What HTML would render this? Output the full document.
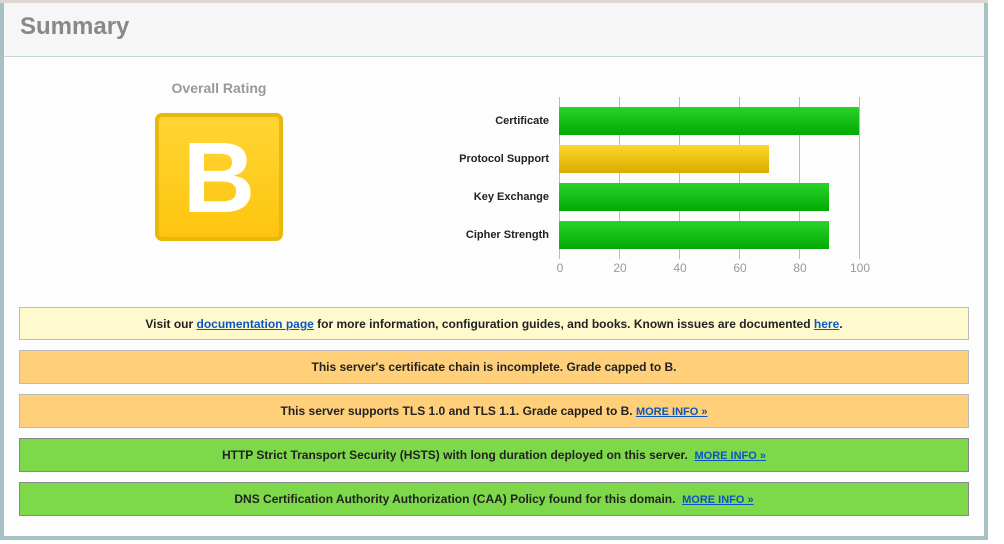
<!DOCTYPE html>
<html><head><meta charset="utf-8"><style>
*{margin:0;padding:0;box-sizing:border-box}
body{width:1004px;height:544px;background:#fff;position:relative;font-family:"Liberation Sans",Arial,sans-serif;overflow:hidden}
.frame{position:absolute;left:0;top:2px;width:988px;height:538px;background:#a6c0c4}
.top{position:absolute;left:0;top:0;width:988px;height:3px;background:#ddd6d2}
.panel{position:absolute;left:4px;top:3px;width:980px;height:533px;background:#fdfdfd}
.hdr{position:absolute;left:0;top:0;width:980px;height:54px;background:#f6f6f6;border-bottom:1px solid #c5d6d6}
.hdr h1{position:absolute;left:16px;top:10px;font-size:24px;font-weight:bold;color:#888}
.or{position:absolute;left:124px;width:190px;top:80px;text-align:center;font-size:14px;font-weight:bold;color:#999}
.grade{position:absolute;left:155px;top:113px;width:128px;height:128px;border:4px solid #e8b80a;border-radius:7px;background:linear-gradient(#ffd535,#fec50e);color:#fff;font-size:100px;font-weight:bold;text-align:center;line-height:122px}
.lab{position:absolute;right:455px;font-size:11px;font-weight:bold;color:#222;text-align:right}
.grid{position:absolute;top:97px;width:1px;height:162px;background:#bbb}
.bar{position:absolute;left:559px;height:28px}
.g{background:linear-gradient(#28d42a,#03a903)}
.y{background:linear-gradient(#ffd72a,#d9ac00)}
.tick{position:absolute;top:261px;font-size:12px;color:#999;width:40px;text-align:center}
.box{position:absolute;left:19px;width:950px;text-align:center;font-size:12px;font-weight:bold;color:#222;border:1px solid #bbb}
.box a{color:#0b55c4;text-decoration:underline}
.box a.s{font-size:11px}
</style></head><body>
<div class="frame"></div><div class="top"></div>
<div class="panel">
<div class="hdr"><h1>Summary</h1></div>
</div>
<div class="or">Overall Rating</div>
<div class="grade">B</div>
<div class="grid" style="left:559px"></div><div class="grid" style="left:619px"></div><div class="grid" style="left:679px"></div><div class="grid" style="left:739px"></div><div class="grid" style="left:799px"></div><div class="grid" style="left:859px"></div>
<div class="lab" style="top:115px">Certificate</div>
<div class="lab" style="top:153px">Protocol Support</div>
<div class="lab" style="top:191px">Key Exchange</div>
<div class="lab" style="top:229px">Cipher Strength</div>
<div class="bar g" style="top:107px;width:300px"></div>
<div class="bar y" style="top:145px;width:210px"></div>
<div class="bar g" style="top:183px;width:270px"></div>
<div class="bar g" style="top:221px;width:270px"></div>
<div class="tick" style="left:540px">0</div><div class="tick" style="left:600px">20</div><div class="tick" style="left:660px">40</div><div class="tick" style="left:720px">60</div><div class="tick" style="left:780px">80</div><div class="tick" style="left:840px">100</div>
<div class="box" style="top:307px;height:33px;line-height:32px;background:#fffacd">Visit our <a>documentation page</a> for more information, configuration guides, and books. Known issues are documented <a>here</a>.</div>
<div class="box" style="top:350px;height:34px;line-height:32px;background:#ffcf7a">This server's certificate chain is incomplete. Grade capped to B.</div>
<div class="box" style="top:394px;height:34px;line-height:32px;background:#ffcf7a">This server supports TLS 1.0 and TLS 1.1. Grade capped to B. <a class="s">MORE INFO »</a></div>
<div class="box" style="top:438px;height:34px;line-height:32px;background:#7ed94a;border-color:#888">HTTP Strict Transport Security (HSTS) with long duration deployed on this server. &nbsp;<a class="s">MORE INFO »</a></div>
<div class="box" style="top:482px;height:34px;line-height:32px;background:#7ed94a;border-color:#888">DNS Certification Authority Authorization (CAA) Policy found for this domain. &nbsp;<a class="s">MORE INFO »</a></div>
</body></html>
